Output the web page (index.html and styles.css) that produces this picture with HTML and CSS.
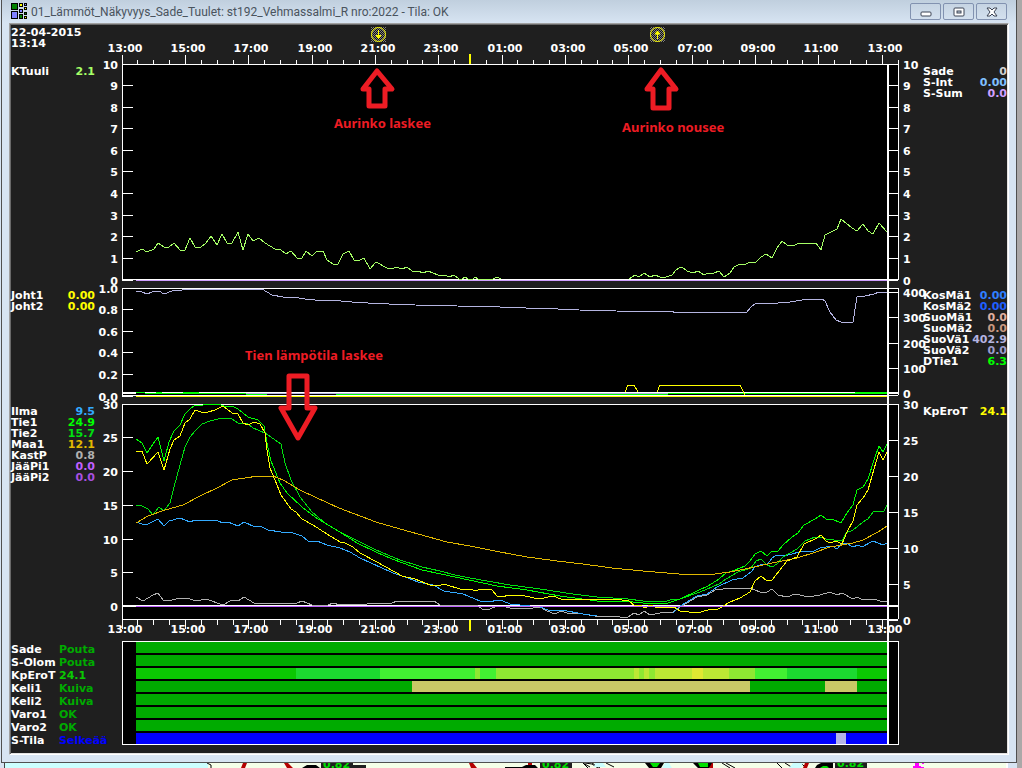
FILE: index.html
```html
<!DOCTYPE html>
<html lang="fi">
<head>
<meta charset="utf-8">
<title>01_Lämmöt_Näkyvyys_Sade_Tuulet</title>
<link rel="stylesheet" href="styles.css">
</head>
<body>
<main class="window">
  <header class="titlebar">
    <svg class="app-icon" width="16" height="16" viewBox="0 0 16 16" aria-hidden="true">
      <g stroke="#000" stroke-width="1" shape-rendering="crispEdges">
        <rect x="0.5" y="0.5" width="6" height="6" fill="#008000"/>
        <rect x="0.5" y="8.5" width="6" height="7" fill="#8080ff"/>
        <rect x="8.5" y="0.5" width="3" height="3" fill="#ffff00"/>
        <rect x="13.5" y="0.5" width="2" height="2" fill="#8080ff"/>
        <rect x="13.5" y="4.5" width="2" height="2" fill="#ffff00"/>
        <rect x="8.5" y="6.5" width="3" height="3" fill="#8080ff"/>
        <rect x="8.5" y="11.5" width="3" height="4" fill="#008000"/>
        <rect x="13.5" y="9.5" width="2" height="2" fill="#008000"/>
        <rect x="13.5" y="13.5" width="2" height="2" fill="#ffff00"/>
      </g>
    </svg>
    <h1 class="title">01_Lämmöt_Näkyvyys_Sade_Tuulet: st192_Vehmassalmi_R nro:2022 - Tila: OK</h1>
    <div class="controls">
      <button class="control" type="button" aria-label="Pienennä"><svg width="12" height="10" viewBox="0 0 12 10"><rect x="1" y="5" width="10" height="4" rx="1" fill="#fff" stroke="#3c4455"/></svg></button>
      <button class="control" type="button" aria-label="Palauta"><svg width="12" height="10" viewBox="0 0 12 10"><rect x="1" y="1" width="10" height="8" rx="1" fill="#fff" stroke="#3c4455"/><rect x="4" y="4" width="4" height="2" fill="#c5d3e2" stroke="#3c4455"/></svg></button>
      <button class="control" type="button" aria-label="Sulje"><svg width="12" height="10" viewBox="0 0 12 10"><path d="M1 1H4L6 3L8 1H11L8 5L11 9H8L6 7L4 9H1L4 5Z" fill="#fff" stroke="#3c4455"/></svg></button>
    </div>
  </header>

  <div class="panel">
    <section class="row">
      <div class="side side-first">
        <p class="stamp">22-04-2015<br>13:14</p>
        <dl class="legend">
          <div class="entry"><dt>KTuuli</dt><dd class="c-wind">2.1</dd></div>
        </dl>
      </div>
      <svg class="chart" viewBox="100 25 820 259" role="img" aria-label="Tuuli ja sade">
        <defs>
          <pattern id="checker" width="2" height="2" patternUnits="userSpaceOnUse">
            <rect width="2" height="2" fill="#101010"/><rect width="1" height="1" fill="#808080"/><rect x="1" y="1" width="1" height="1" fill="#808080"/>
          </pattern>
        </defs>
        <rect class="plot" x="122" y="64" width="776" height="216"/>
        <path class="axis" d="M122 55V280M122 64H898M898 60V280M122 280H133M122 279H898"/>
        <path class="axis" d="M185 55V64M248 55V64M312 55V64M375 55V64M438 55V64M502 55V64M565 55V64M628 55V64M692 55V64M755 55V64M818 55V64M882 55V64"/>
        <path class="axis" d="M137 60V64M153 60V64M169 60V64M201 60V64M217 60V64M233 60V64M264 60V64M280 60V64M296 60V64M327 60V64M343 60V64M359 60V64M391 60V64M407 60V64M422 60V64M454 60V64M486 60V64M517 60V64M533 60V64M549 60V64M581 60V64M597 60V64M612 60V64M644 60V64M660 60V64M676 60V64M707 60V64M723 60V64M739 60V64M771 60V64M787 60V64M802 60V64M834 60V64M850 60V64M866 60V64"/>
        <path class="axis" d="M122 85H133M122 107H133M122 128H133M122 150H133M122 171H133M122 193H133M122 215H133M122 236H133M122 258H133M888 85H898M888 107H898M888 128H898M888 150H898M888 171H898M888 193H898M888 215H898M888 236H898M888 258H898M888 280H898"/>
        <rect class="midnight" x="469" y="54" width="2" height="10"/>
        <g class="label mid">
          <text x="125" y="52">13:00</text><text x="188" y="52">15:00</text><text x="251" y="52">17:00</text><text x="315" y="52">19:00</text><text x="378" y="52">21:00</text><text x="441" y="52">23:00</text><text x="505" y="52">01:00</text><text x="568" y="52">03:00</text><text x="631" y="52">05:00</text><text x="695" y="52">07:00</text><text x="758" y="52">09:00</text><text x="821" y="52">11:00</text><text x="885" y="52">13:00</text>
        </g>
        <g class="label end">
          <text x="118" y="69">10</text><text x="118" y="90">9</text><text x="118" y="112">8</text><text x="118" y="133">7</text><text x="118" y="155">6</text><text x="118" y="176">5</text><text x="118" y="198">4</text><text x="118" y="220">3</text><text x="118" y="241">2</text><text x="118" y="263">1</text><text x="118" y="285">0</text>
        </g>
        <g class="label">
          <text x="903" y="69">10</text><text x="903" y="90">9</text><text x="903" y="112">8</text><text x="903" y="133">7</text><text x="903" y="155">6</text><text x="903" y="176">5</text><text x="903" y="198">4</text><text x="903" y="220">3</text><text x="903" y="241">2</text><text x="903" y="263">1</text><text x="903" y="285">0</text>
        </g>
        <polyline class="line s-wind" points="136,252 142,249 147,252 154,249 158,243 164,247 169,247 174,243 180,250 185,250 190,238 195,247 201,247 206,243 211,236 217,245 222,234 227,243 232,243 238,232 243,250 248,234 253,241 259,238 265,243 275,249 281,250 286,254 291,251 297,258 302,258 306,251 312,256 317,251 323,251 327,260 333,264 338,264 340,260 343,254 349,251 354,260 360,260 364,258 370,269 376,262 387,268 392,269 396,267 402,269 407,267 412,271 418,271 423,273 428,271 438,275 445,275 449,277 454,275 459,279 462,279 465,277 468,279 473,279 475,277 478,279 493,279 497,277 501,279"/>
        <polyline class="line s-wind" points="629,279 635,275 639,277 644,273 650,277 655,275 660,277 666,277 672,275 676,270 679,268 682,267 687,271 693,273 698,271 704,275 708,273 714,273 719,271 724,277 730,273 734,267 740,264 746,264 750,262 756,262 761,257 766,254 772,258 777,248 782,241 787,245 795,245 799,243 816,243 821,250 825,235 837,229 841,219 852,228 857,231 863,224 868,231 873,234 879,223 887,232"/>
        <path class="line s-sum" d="M136 280H887"/>
        <rect class="now" x="887" y="65" width="2" height="219"/>
        <g class="sun">
          <rect x="371" y="27" width="15" height="15" fill="url(#checker)"/>
          <circle cx="378.5" cy="34.5" r="7"/>
          <path d="M378.500 30V38M376 35.500L378.500 38.500L381 35.500Z"/>
          <rect x="650" y="27" width="15" height="15" fill="url(#checker)"/>
          <circle cx="657.5" cy="34.5" r="7"/>
          <path d="M657.500 39V31M655 34L657.500 31L660 34Z"/>
        </g>
        <path class="arrow" d="M377 71L392 89H385V106H369V89H363Z"/>
        <path class="arrow" d="M661 70L676 89H669V108H653V89H647Z"/>
        <text class="note" x="334" y="128">Aurinko laskee</text>
        <text class="note" x="622" y="132">Aurinko nousee</text>
      </svg>
      <div class="side side-right side-rain">
        <dl class="legend">
          <div class="entry"><dt>Sade</dt><dd class="c-rain">0</dd></div>
          <div class="entry"><dt>S-Int</dt><dd class="c-int">0.00</dd></div>
          <div class="entry"><dt>S-Sum</dt><dd class="c-sum">0.0</dd></div>
        </dl>
      </div>
    </section>

    <section class="row">
      <div class="side">
        <dl class="legend">
          <div class="entry"><dt>Joht1</dt><dd class="c-yellow">0.00</dd></div>
          <div class="entry"><dt>Joht2</dt><dd class="c-yellow">0.00</dd></div>
        </dl>
      </div>
      <svg class="chart" viewBox="100 284 820 116" role="img" aria-label="Johtavuus ja suola">
        <rect class="plot" x="122" y="288" width="776" height="108"/>
        <path class="axis" d="M122 288V395M122 288H898M898 288V395M122 395H898M122 392H887M122 396H133M122 393H136"/>
        <path class="axis" d="M122 309H133M122 331H133M122 352H133M122 374H133M888 292H898M888 317H898M888 343H898M888 368H898M888 393H899M888 392H899"/>
        <g class="label end">
          <text x="118" y="293">1.0</text><text x="118" y="314">0.8</text><text x="118" y="336">0.6</text><text x="118" y="357">0.4</text><text x="118" y="379">0.2</text><text x="118" y="401">0.0</text>
        </g>
        <g class="label">
          <text x="903" y="297">400</text><text x="903" y="322">300</text><text x="903" y="348">200</text><text x="903" y="373">100</text><text x="903" y="398">0</text>
        </g>
        <polyline class="line s-salt" points="136,291 142,292 147,294 152,292 159,291 164,294 172,291 182,290 188,289 246,289 262,289 272,295 283,297 293,297 305,299 315,300 330,300 352,302 368,303 389,304 415,305 457,306 500,307 526,308 558,309 579,310 616,311 674,312"/>
        <path class="line s-salt" d="M673 312H743"/>
        <polyline class="line s-salt" points="742,312 746,313 751,307 756,303 768,304 778,303 790,302 802,300 818,299 822,299 825,301 830,312 836,320 841,322 853,322 857,297 865,296 874,294 879,292 883,293 887,292"/>
        <path class="line s-salt" d="M199 393H887"/>
        <path class="line s-tie1" d="M136 392H145M156 392H162M183 392H199M145 393H246M246 394H267M336 394H668M668 393H887M855 392H887"/>
        <polyline class="line s-yellow" points="625,392 628,385 634,385 638,392"/>
        <polyline class="line s-yellow" points="657,392 660,385 740,385 745,395"/>
        <path class="line s-yellow" d="M136 396H887"/>
        <rect class="now" x="887" y="284" width="2" height="116"/>
        <text class="note" x="245" y="360">Tien lämpötila laskee</text>
      </svg>
      <div class="side side-right">
        <dl class="legend">
          <div class="entry"><dt>KosMä1</dt><dd class="c-kos1">0.00</dd></div>
          <div class="entry"><dt>KosMä2</dt><dd class="c-kos2">0.00</dd></div>
          <div class="entry"><dt>SuoMä1</dt><dd class="c-suo1">0.0</dd></div>
          <div class="entry"><dt>SuoMä2</dt><dd class="c-suo2">0.0</dd></div>
          <div class="entry"><dt>SuoVä1</dt><dd class="c-vah1">402.9</dd></div>
          <div class="entry"><dt>SuoVä2</dt><dd class="c-vah2">0.0</dd></div>
          <div class="entry"><dt>DTie1</dt><dd class="c-tie1">6.3</dd></div>
        </dl>
      </div>
    </section>

    <section class="row">
      <div class="side">
        <dl class="legend">
          <div class="entry"><dt>Ilma</dt><dd class="c-air">9.5</dd></div>
          <div class="entry"><dt>Tie1</dt><dd class="c-tie1">24.9</dd></div>
          <div class="entry"><dt>Tie2</dt><dd class="c-tie2">15.7</dd></div>
          <div class="entry"><dt>Maa1</dt><dd class="c-soil">12.1</dd></div>
          <div class="entry"><dt>KastP</dt><dd class="c-dew">0.8</dd></div>
          <div class="entry"><dt>JääPi1</dt><dd class="c-ice">0.0</dd></div>
          <div class="entry"><dt>JääPi2</dt><dd class="c-ice2">0.0</dd></div>
        </dl>
      </div>
      <svg class="chart" viewBox="100 400 820 236" role="img" aria-label="Lämpötilat">
        <rect class="plot" x="122" y="404" width="776" height="215"/>
        <path class="axis" d="M122 404V619M122 404H898M898 404V619M122 619H898M122 605H899M122 606H136M888 606H899M888 620H898"/>
        <path class="axis" d="M122 437H133M122 471H133M122 505H133M122 539H133M122 572H133M888 440H898M888 476H898M888 512H898M888 548H898M888 584H898"/>
        <path class="axis" d="M122 619V629M185 619V629M248 619V629M312 619V629M375 619V629M438 619V629M502 619V629M565 619V629M628 619V629M692 619V629M755 619V629M818 619V629M882 619V629"/>
        <path class="axis" d="M137 619V625M153 619V625M169 619V625M201 619V625M217 619V625M233 619V625M264 619V625M280 619V625M296 619V625M327 619V625M343 619V625M359 619V625M391 619V625M407 619V625M422 619V625M454 619V625M486 619V625M517 619V625M533 619V625M549 619V625M581 619V625M597 619V625M612 619V625M644 619V625M660 619V625M676 619V625M707 619V625M723 619V625M739 619V625M771 619V625M787 619V625M802 619V625M834 619V625M850 619V625M866 619V625"/>
        <rect class="midnight" x="469" y="620" width="2" height="11"/>
        <polyline class="line s-dew" points="136,597 143,601 153,595 158,593 164,601 172,600 180,598 190,599 196,601 201,600 206,599 223,605 232,600 238,601 244,597 254,603 297,603 302,601 312,605 328,605 333,603 340,605 367,604 392,603 397,601 434,601 440,605 477,605 482,609 490,609 497,606 503,606 510,608 527,609 540,607 547,611 555,614 561,611 567,613 583,614 595,616 620,617 628,617 634,613 639,615 644,611 650,615 660,613 673,612 680,607 697,597 707,595 715,590 723,589 750,588 760,592 767,592 772,589 778,595 787,597 795,594 809,597 820,595 830,592 837,595 842,593 853,599 857,597 863,600 874,599 883,602 887,601"/>
        <polyline class="line s-air" points="136,522 142,524 148,524 158,519 164,526 169,521 180,518 190,522 195,520 218,521 223,523 228,522 238,526 244,522 255,527 260,526 268,530 281,532 290,532 302,536 308,541 317,541 327,545 340,548 350,552 360,558 393,573 408,578 418,582 433,585 444,591 463,594 480,601 490,602 497,600 503,601 510,604 530,606 540,607 548,610 555,611 562,610 583,614 597,616"/>
        <polyline class="line s-air" points="673,613 680,606 697,596 707,594 717,587 732,580 743,578 751,572 755,567 762,564 767,565 772,558 777,555 788,555 803,551 812,552 820,548 832,546 837,549 842,543 846,543 853,547 858,545 862,547 873,541 883,545 887,543"/>
        <polyline class="line s-tie2" points="136,505 142,506 148,509 153,515 159,507 164,511 170,503 174,487 180,465 185,447 190,437 195,431 202,424 210,421 222,418 232,419 238,423 248,424 253,428 265,433 281,444 285,463 291,480 300,497 312,512 325,523 340,532 360,542 376,550 400,560 422,567 440,571 455,575 470,578 487,581 510,585 540,589 573,594 597,597 628,599 643,601 667,601 673,599 680,599 700,592 719,584 726,579 738,572 751,568 756,561 761,559 767,565 772,567 777,564 783,557 797,549 805,541 815,537 821,537 826,539 842,541 846,533 853,530 863,522 868,519 873,512 884,511 887,505"/>
        <polyline class="line s-tie1" points="136,439 142,443 147,453 153,444 158,437 164,461 169,442 174,431 180,425 185,414 190,409 195,405 200,406 206,404 218,404 224,406 232,406 238,409 248,417 258,420 264,426 267,443 271,461 280,483 287,493 302,507 315,517 328,525 340,532 357,543 376,552 392,559 422,570 455,577 497,586 527,590 560,596 597,601 623,601 643,603 668,603 680,599 697,591 708,586 719,579 726,573 735,570 745,566 750,561 755,554 761,551 767,556 772,551 778,551 783,545 792,537 798,533 804,525 815,519 821,515 826,519 832,519 841,523 847,513 853,505 857,490 863,487 868,479 874,460 879,446 883,452 887,444"/>
        <polyline class="line s-soil" points="136,523 148,516 165,510 183,505 200,496 217,488 232,480 258,476 273,476 283,480 300,490 317,498 339,508 376,522 400,529 447,542 470,546 500,552 527,557 557,561 583,564 612,568 643,571 679,574 715,574 730,572 745,569 777,562 797,558 813,553 830,547 853,543 863,540 878,532 887,526"/>
        <polyline class="line s-yellow" points="136,452 142,451 147,464 158,452 164,470 170,449 174,440 180,436 185,423 190,419 195,410 201,412 208,412 215,410 223,406 232,413 238,414 243,423 248,425 254,422 260,424 265,433 267,450 270,468 275,480 281,495 291,509 296,512 302,519 313,525 327,534 340,542 343,542 353,547 360,553 377,562 402,576 415,579 430,585 438,586 444,584 463,590 471,589 475,591 481,589 492,590 497,596 503,597 508,595 525,596 539,599 553,596 561,599 588,599 615,599 629,601 635,606 640,605 645,608 650,605 655,607 674,607 680,611 697,613 708,610 718,609 730,602 740,598 750,592 755,581 761,576 767,581 772,580 787,561 797,557 804,544 817,538 821,535 826,541 830,543 836,541 842,544 847,532 853,521 857,505 863,498 868,490 874,469 879,452 883,460 887,452"/>
        <path class="line s-ice" d="M136 606H887"/>
        <rect class="now" x="887" y="400" width="2" height="236"/>
        <g class="label end">
          <text x="118" y="409">30</text><text x="118" y="442">25</text><text x="118" y="476">20</text><text x="118" y="510">15</text><text x="118" y="544">10</text><text x="118" y="577">5</text><text x="118" y="611">0</text>
        </g>
        <g class="label">
          <text x="903" y="409">30</text><text x="903" y="445">25</text><text x="903" y="481">20</text><text x="903" y="517">15</text><text x="903" y="553">10</text><text x="903" y="589">5</text><text x="903" y="625">0</text>
        </g>
        <g class="label mid">
          <text x="125" y="633">13:00</text><text x="188" y="633">15:00</text><text x="251" y="633">17:00</text><text x="315" y="633">19:00</text><text x="378" y="633">21:00</text><text x="441" y="633">23:00</text><text x="505" y="633">01:00</text><text x="568" y="633">03:00</text><text x="631" y="633">05:00</text><text x="695" y="633">07:00</text><text x="758" y="633">09:00</text><text x="821" y="633">11:00</text><text x="885" y="633">13:00</text>
        </g>
        <path class="arrow" d="M289 376H307V408H315L298 438L281 408H289Z"/>
      </svg>
      <div class="side side-right">
        <dl class="legend">
          <div class="entry"><dt>KpEroT</dt><dd class="c-yellow">24.1</dd></div>
        </dl>
      </div>
    </section>

    <section class="row">
      <div class="side side-status">
        <dl class="status">
          <dt>Sade</dt><dd class="c-ok">Pouta</dd>
          <dt>S-Olom</dt><dd class="c-ok">Pouta</dd>
          <dt>KpEroT</dt><dd class="c-diff">24.1</dd>
          <dt>Keli1</dt><dd class="c-ok">Kuiva</dd>
          <dt>Keli2</dt><dd class="c-ok">Kuiva</dd>
          <dt>Varo1</dt><dd class="c-ok">OK</dd>
          <dt>Varo2</dt><dd class="c-ok">OK</dd>
          <dt>S-Tila</dt><dd class="c-clear">Selkeää</dd>
        </dl>
      </div>
      <svg class="chart" viewBox="100 636 820 117" role="img" aria-label="Tilahistoria">
        <rect x="122" y="641" width="777" height="104" fill="#fff"/>
        <rect class="plot" x="123" y="642" width="775" height="102"/>
        <g fill="#00ab00">
          <rect x="136" y="642" width="751" height="11"/>
          <rect x="136" y="655" width="751" height="11"/>
          <rect x="136" y="681" width="751" height="11"/>
          <rect x="136" y="694" width="751" height="11"/>
          <rect x="136" y="707" width="751" height="11"/>
          <rect x="136" y="720" width="751" height="11"/>
        </g>
        <g>
          <rect x="136" y="668" width="160" height="11" fill="#0bc802"/>
          <rect x="296" y="668" width="84" height="11" fill="#1cda30"/>
          <rect x="380" y="668" width="116" height="11" fill="#42f032"/>
          <rect x="475" y="668" width="5" height="11" fill="#8ee832"/>
          <rect x="496" y="668" width="259" height="11" fill="#8ee832"/>
          <rect x="634" y="668" width="5" height="11" fill="#bce834"/>
          <rect x="644" y="668" width="5" height="11" fill="#bce834"/>
          <rect x="655" y="668" width="74" height="11" fill="#bce834"/>
          <rect x="692" y="668" width="11" height="11" fill="#e0e832"/>
          <rect x="755" y="668" width="32" height="11" fill="#42f032"/>
          <rect x="787" y="668" width="70" height="11" fill="#1cda30"/>
          <rect x="857" y="668" width="30" height="11" fill="#0bc802"/>
          <rect x="412" y="681" width="338" height="11" fill="#cac966"/>
          <rect x="825" y="681" width="32" height="11" fill="#cac966"/>
          <rect x="136" y="733" width="751" height="11" fill="#0000ff"/>
          <rect x="836" y="733" width="10" height="11" fill="#b4b4e8"/>
        </g>
        <rect class="now" x="887" y="636" width="2" height="109"/>
      </svg>
      <div class="side side-right"></div>
    </section>
  </div>
</main>

<svg class="map" viewBox="0 0 1022 5" role="img" aria-label="Kartta">
  <rect width="1022" height="5" fill="#f5ffe8"/>
  <rect width="4" height="5" fill="#d7e4f2"/>
  <rect x="4" width="1" height="5" fill="#444"/>
  <rect x="5" width="203" height="5" fill="#ccffff"/>
  <path d="M207 0L211 2V5M583 0L590 4M585 0L592 1L598 5M583 0L588 5M592 0L600 5M606 0L614 4M722 0L730 5M726 0L735 5M777 0L782 5M785 0L793 5M801 0L806 5" fill="none" stroke="#000"/>
  <path d="M793 0H803L801 5H789ZM595 0H603L606 4H594ZM665 0H669L672 5H662Z" fill="#ccffff"/>
  <path d="M243 0H247L245 5H241ZM284 0H288L293 5H287ZM469 0H473L477 5H471ZM528 0H532V4H528ZM710 0H713V5H709ZM805 0H809L807 5H803Z" fill="#b40000"/>
  <path d="M302 5L307 2H316L320 5ZM505 4H522L526 2H535L538 5H505ZM645 0H664L661 5H649ZM693 0H712L709 5H698ZM817 2L821 0H833V5H815Z" fill="#000"/>
  <path d="M650 0H660L657 4H653ZM698 0H708V4H700ZM820 5L823 3H827L829 5Z" fill="#00e000"/>
  <g class="tag"><rect x="321" width="32" height="5"/><rect x="353" y="2" width="13" height="3"/><rect x="540" width="32" height="5"/><rect x="835" width="32" height="5"/></g>
  <g class="tag-text"><text x="323" y="5">0.82</text><text x="542" y="5">0.82</text><text x="837" y="4">0.82</text></g>
  <path d="M915 0H919V3H921V5H913V3H915ZM922 0H924V1H922ZM921 4H924V5H921Z" fill="#ff00ff"/>
  <rect x="1006" width="2" height="5" fill="#fff"/>
  <rect x="1008" width="9" height="5" fill="#d7e4f2"/>
  <rect x="1017" width="5" height="5" fill="#aba8a8"/>
</svg>
</body>
</html>
```

FILE: styles.css
```css
* { box-sizing: border-box; }

body {
  margin: 0;
  background: linear-gradient(90deg, #d7e4f2 50%, #aba8a8 50%);
  overflow-x: hidden;
}

.window {
  margin: 0 5px 0 1px;
  padding: 0 7px 7px;
  border: 1px solid #505050;
  border-top: 0;
  background: #d7e4f2;
}

.titlebar {
  display: flex;
  align-items: center;
  gap: 4px;
  height: 23px;
  margin: 0 -7px;
  padding: 0 9px;
  background: linear-gradient(#c0cfde, #d7e4f2);
}

.app-icon { flex: none; margin-top: -1px; }

.title {
  flex: 1;
  margin: 0;
  overflow: hidden;
  color: #4a545e;
  font: 400 12px/20px Roboto, "Noto Sans", sans-serif;
  white-space: nowrap;
}

.controls { display: flex; gap: 2px; }

.control {
  display: flex;
  align-items: center;
  justify-content: center;
  width: 31px;
  height: 17px;
  padding: 0;
  border: 1px solid #8292b0;
  border-radius: 2px;
  background: linear-gradient(#c6d4e3, #d3e0ee);
}
.control svg { flex: none; }

.panel {
  border: 1px solid #e3e3e3;
  border-color: #a0a0a0 #fff #fff #a0a0a0;
  box-shadow: inset 1px 1px #696969, inset -1px -1px #e3e3e3;
  padding: 1px;
  background: #1f1f1f;
  color: #fff;
  font: 700 11px/11px "DejaVu Sans", Verdana, sans-serif;
}

.row {
  display: grid;
  grid-template-columns: 89px minmax(0, 1fr) 87px;
}

.chart {
  display: block;
  width: 100%;
  height: auto;
  overflow: visible;
}

.side { padding: 6px 5px 0 0; white-space: nowrap; }
.side-first { padding-top: 2px; }
.side-right { padding-right: 0; padding-left: 3px; }
.side-rain { padding-top: 41px; }
.side-status { padding-top: 7px; }

.stamp { margin: 0 0 17px; }

.legend { margin: 0; }
.entry { display: flex; }
.entry dt { flex: 1 1 0; min-width: 0; }
.entry dd { margin: 0; }

.status {
  display: grid;
  grid-template-columns: 48px 1fr;
  margin: 0;
  line-height: 13px;
}
.status dd { margin: 0; }

.c-wind { color: #a6ff66; }
.c-rain { color: #d0d0d0; }
.c-int { color: #80c0ff; }
.c-sum { color: #d0a0ff; }
.c-yellow { color: #ffff00; }
.c-kos1 { color: #3080ff; }
.c-kos2 { color: #2060ff; }
.c-suo1 { color: #e0b0a0; }
.c-suo2 { color: #c89880; }
.c-vah1 { color: #b4b4e0; }
.c-vah2 { color: #9c9ccc; }
.c-tie1 { color: #00ff00; }
.c-tie2 { color: #00e010; }
.c-air { color: #33aaff; }
.c-soil { color: #e0b800; }
.c-dew { color: #b0b0b0; }
.c-ice { color: #c060ff; }
.c-ice2 { color: #a850e0; }
.c-ok { color: #00ab00; }
.c-diff { color: #0bc802; }
.c-clear { color: #0000ff; }

.plot { fill: #000; }
.axis, .line { fill: none; stroke-width: 1px; shape-rendering: crispEdges; }
.axis { stroke: #fff; }
.now { fill: #fff; }
.midnight { fill: #ffff00; }

.s-wind { stroke: #a6ff66; }
.s-sum { stroke: #d0a0ff; }
.s-salt { stroke: #b4b4e0; }
.s-yellow { stroke: #ffff00; }
.s-tie1 { stroke: #00ff00; }
.s-tie2 { stroke: #00e010; }
.s-air { stroke: #33aaff; }
.s-soil { stroke: #e0b800; }
.s-dew { stroke: #b0b0b0; }
.s-ice { stroke: #c060ff; }

.label { fill: #fff; }
.mid { text-anchor: middle; }
.end { text-anchor: end; }

.sun circle { fill: none; stroke: #ffff00; }
.sun path { fill: #ffff00; stroke: #ffff00; }

.arrow { fill: none; stroke: #ed1c24; stroke-width: 5px; stroke-linejoin: round; }

.note {
  fill: #ed1c24;
  font: 700 13px "Noto Sans", "Open Sans", sans-serif;
}

.map { display: block; width: 100%; height: auto; overflow: hidden; }
.tag { fill: #1f1f1f; }
.tag-text { fill: #00e000; font: 700 11px "DejaVu Sans", Verdana, sans-serif; }
```
